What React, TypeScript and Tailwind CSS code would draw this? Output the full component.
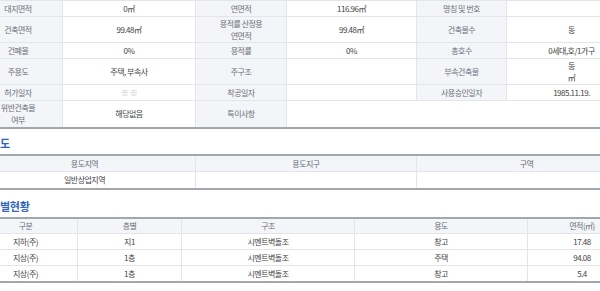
import React from "react";

type Cell = { t?: React.ReactNode; h?: boolean; span?: boolean; dim?: boolean };

const info: { h: string; cells: Cell[] }[] = [
  {
    h: "h-[16px]",
    cells: [
      { t: "대지면적", h: true },
      { t: "0㎡" },
      { t: "연면적", h: true },
      { t: "116.96㎡" },
      { t: "명칭 및 번호", h: true },
      {},
    ],
  },
  {
    h: "h-[26px]",
    cells: [
      { t: "건축면적", h: true },
      { t: "99.48㎡" },
      {
        t: (
          <>
            용적률 산정용
            <br />
            연면적
          </>
        ),
        h: true,
      },
      { t: "99.48㎡" },
      { t: "건축물수", h: true },
      { t: "동" },
    ],
  },
  {
    h: "h-[16px]",
    cells: [
      { t: "건폐율", h: true },
      { t: "0%" },
      { t: "용적률", h: true },
      { t: "0%" },
      { t: "총호수", h: true },
      { t: "0세대,호/1가구" },
    ],
  },
  {
    h: "h-[26px]",
    cells: [
      { t: "주용도", h: true },
      { t: "주택, 부속사" },
      { t: "주구조", h: true },
      {},
      { t: "부속건축물", h: true },
      {
        t: (
          <>
            동
            <br />㎡
          </>
        ),
      },
    ],
  },
  {
    h: "h-[16px]",
    cells: [
      { t: "허가일자", h: true },
      { t: "※ ※", dim: true },
      { t: "착공일자", h: true },
      {},
      { t: "사용승인일자", h: true },
      { t: "1985.11.19." },
    ],
  },
  {
    h: "h-[26px]",
    cells: [
      {
        t: (
          <>
            위반건축물
            <br />
            여부
          </>
        ),
        h: true,
      },
      { t: "해당없음" },
      { t: "특이사항", h: true },
      { span: true },
    ],
  },
];

const floors = [
  ["지하(주)", "지1", "시멘트벽돌조", "창고", "17.48"],
  ["지상(주)", "1층", "시멘트벽돌조", "주택", "94.08"],
  ["지상(주)", "1층", "시멘트벽돌조", "창고", "5.4"],
];

function Title({ children }: { children: React.ReactNode }) {
  return (
    <div className="flex items-center pl-[26px] pt-[3px] text-[11px] font-bold tracking-[-0.3px] text-[#2f66b8]">
      {children}
    </div>
  );
}

export default function App() {
  return (
    <div className="w-[600px] h-[291px] overflow-hidden bg-white font-['Noto_Sans_CJK_KR','Noto_Sans',sans-serif] text-[8px] tracking-[-0.5px] leading-[12px]">
      <div className="-ml-[26px] w-[662px]">
        {/* 기본 개요 */}
        <div className="grid grid-cols-[89px_133px_91px_130px_90px_129px] border-t border-[#e3e5e8] border-b-2 border-b-[#a3a7ad]">
          {info.map((row, ri) =>
            row.cells.map((c, ci) => {
              const last = ci === row.cells.length - 1;
              const lastRow = ri === info.length - 1;
              return (
                <div
                  key={ri + "-" + ci}
                  className={[
                    "flex items-center justify-center text-center border-[#e3e5e8]",
                    row.h,
                    c.span ? "col-span-3" : "",
                    last ? "" : "border-r",
                    lastRow ? "" : "border-b",
                    c.h ? "bg-[#f3f5f8] text-[#6b7079]" : c.dim ? "text-[#b5b8bd]" : "text-[#444]",
                  ].join(" ")}
                >
                  {c.t}
                </div>
              );
            })
          )}
        </div>

        <div className="h-[25px] flex">
          <Title>도</Title>
        </div>

        {/* 지역지구 */}
        <div className="grid grid-cols-[222px_221px_219px] border-t-2 border-[#a3a7ad] border-b-2">
          {["용도지역", "용도지구", "구역"].map((t, i) => (
            <div
              key={t}
              className={
                "h-[16px] flex items-center justify-center bg-[#f3f5f8] text-[#6b7079] border-b border-b-[#e3e5e8] " +
                (i < 2 ? "border-r border-r-[#e3e5e8]" : "")
              }
            >
              {t}
            </div>
          ))}
          {["일반상업지역", "", ""].map((t, i) => (
            <div
              key={i}
              className={
                "h-[16px] flex items-center justify-center text-[#444] " +
                (i < 2 ? "border-r border-r-[#e3e5e8]" : "")
              }
            >
              {t}
            </div>
          ))}
        </div>

        <div className="h-[27px] flex">
          <div className="pt-[2px] flex">
            <Title>별현황</Title>
          </div>
        </div>

        {/* 층별현황 */}
        <div className="grid grid-cols-[104px_104px_173px_173px_108px] border-t-2 border-[#a3a7ad] border-b-2">
          {["구분", "층별", "구조", "용도", "면적(㎡)"].map((t, i) => (
            <div
              key={t}
              className={
                "h-[15px] flex items-center justify-center bg-[#f3f5f8] text-[#6b7079] border-b border-b-[#e3e5e8] " +
                (i < 4 ? "border-r border-r-[#e3e5e8]" : "")
              }
            >
              {t}
            </div>
          ))}
          {floors.map((r, ri) =>
            r.map((t, i) => (
              <div
                key={ri + "-" + i}
                className={[
                  "flex items-center justify-center text-[#444]",
                  ri === floors.length - 1 ? "h-[15px]" : "h-[16px] border-b border-b-[#e3e5e8]",
                  i < 4 ? "border-r border-r-[#e3e5e8]" : "",
                ].join(" ")}
              >
                {t}
              </div>
            ))
          )}
        </div>
      </div>
    </div>
  );
}
